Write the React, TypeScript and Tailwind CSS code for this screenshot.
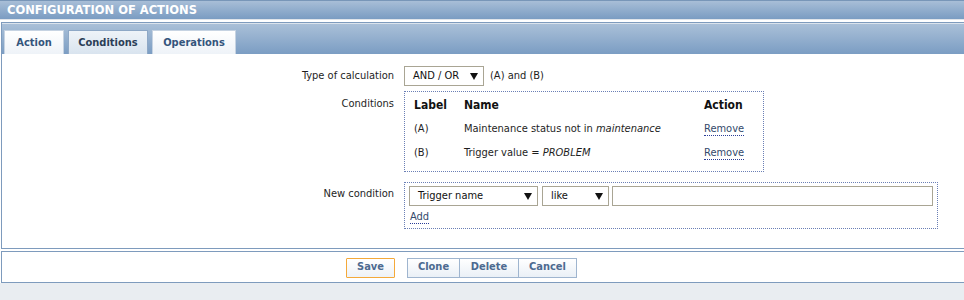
import React from "react";

function Arrow() {
  return (
    <svg width="8" height="7" viewBox="0 0 8 7" className="shrink-0">
      <path d="M0 0 H8 L4 7 Z" fill="#111" />
    </svg>
  );
}

function FakeSelect({ text, width }: { text: string; width: string }) {
  return (
    <div className={`${width} h-[20px] border border-[#a9a594] bg-white flex items-center justify-between pl-[8px] pr-[5px] text-[#111]`}>
      <span>{text}</span>
      <Arrow />
    </div>
  );
}

function RemoveLink() {
  return <span className="text-[#33496b] border-b border-dotted border-[#2a3d96] leading-[12px]">Remove</span>;
}

export default function App() {
  return (
    <div className="w-[964px] h-[300px] overflow-hidden bg-[#e9edf1] text-[11px] text-[#1e1e1e] font-['DejaVu_Sans_Condensed','DejaVu_Sans',sans-serif]">
      <div className="h-[19px] border-t border-[#7896b8] bg-linear-to-b from-[#a8bed7] to-[#7a9cc2] pl-[7px] text-white font-bold text-[11.5px] leading-[18px] font-['DejaVu_Sans',sans-serif]">
        CONFIGURATION OF ACTIONS
      </div>
      <div className="h-[3px] bg-white border-t border-[#dfe4ea]" />
      <div className="bg-white">
        <div className="ml-[1px] w-[980px] border border-[#7e9bbd]">
          <div className="h-[31px] bg-linear-to-b from-[#aac0d8] to-[#7b9dc3] flex items-end gap-[4px] pl-[2px] border-t border-[#dbe3ec]">
            <div className="w-[60px] h-[24px] flex items-center justify-center pt-[1px] bg-linear-to-b from-white to-[#eef3f8] border border-b-0 border-[#c6d3e2] font-bold text-[#34557c]">
              Action
            </div>
            <div className="w-[80px] h-[24px] flex items-center justify-center pt-[1px] bg-linear-to-b from-[#eef3f8] to-[#d9e4ef] border border-b-0 border-[#8ea8c6] font-bold text-[#2b3e57]">
              Conditions
            </div>
            <div className="w-[84px] h-[24px] flex items-center justify-center pt-[1px] bg-linear-to-b from-white to-[#eef3f8] border border-b-0 border-[#c6d3e2] font-bold text-[#34557c]">
              Operations
            </div>
          </div>
          <div className="h-[194px] bg-white pt-[12px]">
            <div className="flex items-center">
              <div className="w-[392px] text-right">Type of calculation</div>
              <div className="ml-[10px] flex items-center gap-[6px]">
                <FakeSelect text="AND / OR" width="w-[80px]" />
                <span>(A) and (B)</span>
              </div>
            </div>
            <div className="flex mt-[5px]">
              <div className="w-[392px] text-right pt-[5px]">Conditions</div>
              <div className="ml-[10px] w-[360px] h-[81px] border border-dotted border-[#6a7fb5] pt-[1px] pl-[9px]">
                <div className="flex h-[24px] items-center font-bold text-[#111] text-[12px]">
                  <div className="w-[50px]">Label</div>
                  <div className="w-[240px]">Name</div>
                  <div>Action</div>
                </div>
                <div className="flex h-[24px] items-center">
                  <div className="w-[50px]">(A)</div>
                  <div className="w-[240px]">
                    Maintenance status not in <i>maintenance</i>
                  </div>
                  <RemoveLink />
                </div>
                <div className="flex h-[24px] items-center">
                  <div className="w-[50px]">(B)</div>
                  <div className="w-[240px]">
                    Trigger value = <i>PROBLEM</i>
                  </div>
                  <RemoveLink />
                </div>
              </div>
            </div>
            <div className="flex mt-[10px]">
              <div className="w-[392px] text-right pt-[4px]">New condition</div>
              <div className="ml-[10px] w-[534px] h-[47px] border border-dotted border-[#6a7fb5] pt-[3px] pl-[4px]">
                <div className="flex gap-[4px]">
                  <FakeSelect text="Trigger name" width="w-[129px]" />
                  <FakeSelect text="like" width="w-[67px]" />
                  <div className="w-[321px] h-[20px] border border-[#a9a594] bg-white -ml-[1px]" />
                </div>
                <div className="mt-[3px] pl-[1px]">
                  <span className="text-[#33496b] border-b border-dotted border-[#2a3d96] leading-[12px]">Add</span>
                </div>
              </div>
            </div>
          </div>
        </div>
        <div className="h-[2px] bg-white" />
        <div className="ml-[1px] w-[980px] h-[32px] border border-[#7e9bbd] bg-white flex items-center pt-[1px]">
          <div className="ml-[344px] w-[49px] h-[20px] flex items-center justify-center border border-[#f4a93a] rounded-[1px] bg-linear-to-b from-white to-[#eef2f7] font-bold text-[#4d6a90]">
            Save
          </div>
          <div className="ml-[12px] flex">
            <div className="w-[53px] h-[20px] flex items-center justify-center border border-[#9fb5cf] bg-linear-to-b from-white to-[#eaf0f6] font-bold text-[#4d6a90]">
              Clone
            </div>
            <div className="w-[59px] h-[20px] flex items-center justify-center border border-l-0 border-[#9fb5cf] bg-linear-to-b from-white to-[#eaf0f6] font-bold text-[#4d6a90]">
              Delete
            </div>
            <div className="w-[58px] h-[20px] flex items-center justify-center border border-l-0 border-[#9fb5cf] bg-linear-to-b from-white to-[#eaf0f6] font-bold text-[#4d6a90]">
              Cancel
            </div>
          </div>
        </div>
      </div>
    </div>
  );
}
